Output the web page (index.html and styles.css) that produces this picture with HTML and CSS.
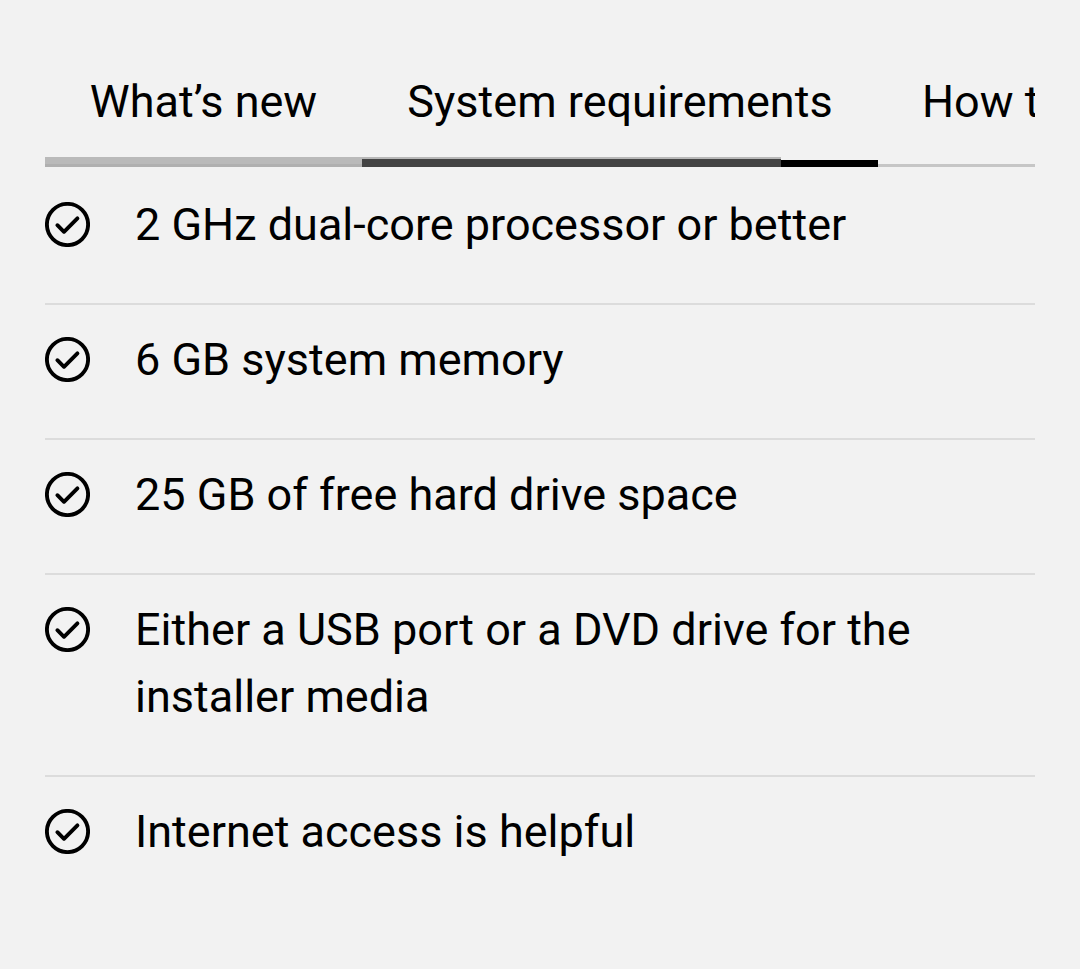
FILE: index.html
```html
<!DOCTYPE html>
<html lang="en">
<head>
<meta charset="utf-8">
<title>System requirements</title>
<link rel="stylesheet" href="styles.css">
</head>
<body>
<main class="panel">
  <nav class="tabs">
    <div class="tab tab-1">What’s new</div>
    <div class="tab tab-2">System requirements</div>
    <div class="tab tab-3">How to install</div>
  </nav>
  <div class="indicator">
    <span class="seg seg-a"></span>
    <span class="seg seg-b"></span>
    <span class="seg seg-c"></span>
    <span class="seg seg-d"></span>
  </div>
  <ul class="reqs">
    <li class="req">
      <svg class="check" viewBox="0 0 45 45" aria-hidden="true"><circle cx="22.5" cy="22.5" r="20.6"/><polyline points="12.4,23.2 19,29.8 32.4,16.4"/></svg>
      <span class="req-text">2 GHz dual-core processor or better</span>
    </li>
    <li class="req">
      <svg class="check" viewBox="0 0 45 45" aria-hidden="true"><circle cx="22.5" cy="22.5" r="20.6"/><polyline points="12.4,23.2 19,29.8 32.4,16.4"/></svg>
      <span class="req-text">6 GB system memory</span>
    </li>
    <li class="req">
      <svg class="check" viewBox="0 0 45 45" aria-hidden="true"><circle cx="22.5" cy="22.5" r="20.6"/><polyline points="12.4,23.2 19,29.8 32.4,16.4"/></svg>
      <span class="req-text">25 GB of free hard drive space</span>
    </li>
    <li class="req">
      <svg class="check" viewBox="0 0 45 45" aria-hidden="true"><circle cx="22.5" cy="22.5" r="20.6"/><polyline points="12.4,23.2 19,29.8 32.4,16.4"/></svg>
      <span class="req-text">Either a USB port or a DVD drive for the installer media</span>
    </li>
    <li class="req">
      <svg class="check" viewBox="0 0 45 45" aria-hidden="true"><circle cx="22.5" cy="22.5" r="20.6"/><polyline points="12.4,23.2 19,29.8 32.4,16.4"/></svg>
      <span class="req-text">Internet access is helpful</span>
    </li>
  </ul>
</main>
</body>
</html>
```

FILE: styles.css
```css
html, body {
  margin: 0;
  padding: 0;
  background: #f2f2f2;
}
body {
  font-family: Roboto, "Liberation Sans", sans-serif;
  color: #000;
}
.panel {
  width: 990px;
  margin-left: 45px;
  padding-top: 76px;
}
.tabs {
  display: flex;
  overflow: hidden;
  width: 990px;
}
.tab {
  flex: none;
  box-sizing: border-box;
  font-size: 45px;
  line-height: 52px;
  padding-bottom: 29px;
  white-space: nowrap;
  text-align: center;
}
.tab-1 { width: 317px; }
.tab-2 { width: 516px; }
.tab-3 { padding-left: 44px; text-align: left; }

.indicator {
  display: flex;
  align-items: flex-end;
  height: 10px;
}
.seg { display: block; flex: none; }
.seg-a { width: 317px; height: 10px; background: linear-gradient(#bababa 0 7px, #b0b0b0 7px); }
.seg-b { width: 419px; height: 10px; background: linear-gradient(#b8b8b8 0 2px, #444 2px); }
.seg-c { width: 97px; height: 7px; background: #000; }
.seg-d { flex: 1; height: 3px; background: #c6c6c6; }

.reqs {
  list-style: none;
  margin: 3px 0 0;
  padding: 0;
}
.req {
  display: flex;
  align-items: flex-start;
  gap: 46px;
  padding: 21px 0 45px;
  border-bottom: 2px solid #dcdcdc;
}
.req:last-child { border-bottom: none; }
.check {
  flex: none;
  width: 45px;
  height: 45px;
  margin-top: 11px;
  fill: none;
  stroke: #000;
  stroke-width: 3.9;
  stroke-linecap: round;
  stroke-linejoin: round;
}
.req-text {
  font-size: 45px;
  line-height: 67px;
  max-width: 800px;
  margin-left: -1px;
}
```
